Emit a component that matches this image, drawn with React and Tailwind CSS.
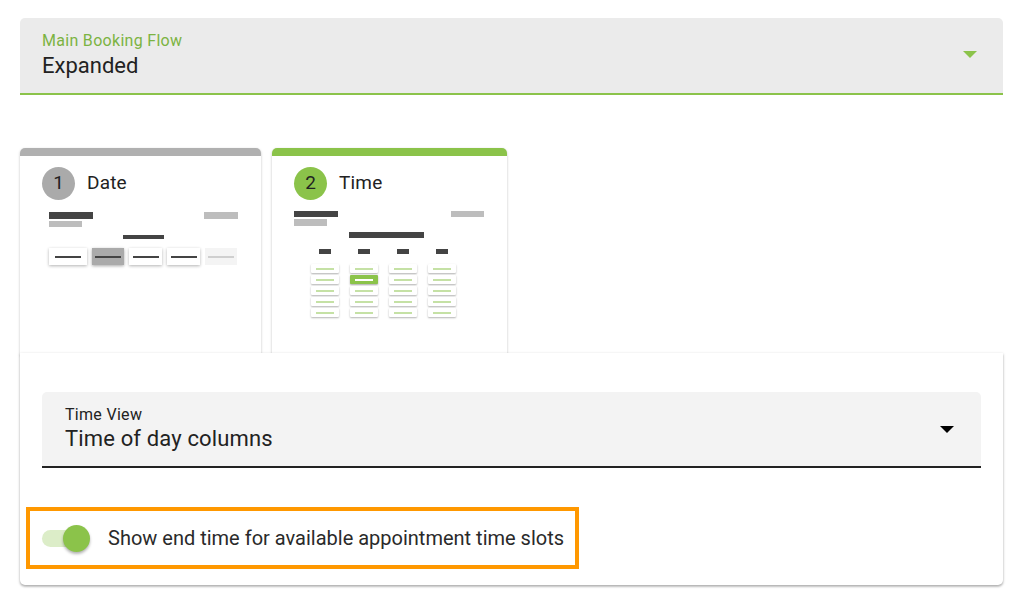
import { useState } from "react";

const GREEN = "#8bc34a";

const DateThumb = () => {
    const boxes = [
        { w: "w-[38px]", kind: "normal" },
        { w: "w-[32px]", kind: "active" },
        { w: "w-[33px]", kind: "normal" },
        { w: "w-[33px]", kind: "normal" },
        { w: "w-[32px]", kind: "off" },
    ];

    return (
        <div className="ml-[7px] mr-[23px] mt-[12px] flex flex-col">
            <div className="flex justify-between">
                <div className="flex flex-col gap-[2px]">
                    <div className="w-[44px] h-[7px] bg-[#444]" />
                    <div className="w-[33px] h-[6px] bg-[#bdbdbd]" />
                </div>
                <div className="w-[34px] h-[7px] bg-[#bdbdbd]" />
            </div>
            <div className="mt-[8px] self-center w-[41px] h-[4px] bg-[#444]" />
            <div className="mt-[9px] flex gap-[5px]">
                {
                    boxes.map((b, i) => (
                        <div
                            key={i}
                            className={"h-[17px] flex items-center justify-center " + b.w + " " +
                                (b.kind === "active" ? "bg-[#aaaaaa] shadow-[0_1px_3px_rgba(0,0,0,0.35)]" :
                                    b.kind === "off" ? "bg-[#f4f4f4]" : "bg-white shadow-[0_1px_3px_rgba(0,0,0,0.3)]")}
                        >
                            <div className={"w-[26px] h-[2px] " + (b.kind === "off" ? "bg-[#cfcfcf]" : "bg-[#444]")} />
                        </div>
                    ))
                }
            </div>
        </div>
    );
};

const TimeThumb = () => {
    const cols = [
        [false, false, false, false, false],
        [false, true, false, false, false],
        [false, false, false, false, false],
        [false, false, false, false, false],
    ];

    return (
        <div className="mr-[23px] mt-[11px] flex flex-col">
            <div className="flex justify-between">
                <div className="flex flex-col gap-[2px]">
                    <div className="w-[44px] h-[6px] bg-[#444]" />
                    <div className="w-[33px] h-[7px] bg-[#bdbdbd]" />
                </div>
                <div className="w-[33px] h-[6px] bg-[#bdbdbd]" />
            </div>
            <div className="mt-[6px] ml-[55px] w-[75px] h-[6px] bg-[#444]" />
            <div className="mt-[11px] ml-[17px] flex gap-[11px]">
                {
                    cols.map((col, ci) => (
                        <div key={ci} className="w-[28px] flex flex-col items-center">
                            <div className="w-[12px] h-[5px] bg-[#444]" />
                            <div className="mt-[10px] flex flex-col gap-[2px]">
                                {
                                    col.map((sel, ri) => (
                                        <div
                                            key={ri}
                                            className={"w-[28px] h-[9px] flex items-center justify-center rounded-[1px] " +
                                                (sel ? "bg-[#8bc34a] shadow-[0_1px_2px_rgba(0,0,0,0.35)]" : "bg-white shadow-[0_1px_2px_rgba(0,0,0,0.3)]")}
                                        >
                                            <div className={"w-[18px] h-[2px] " + (sel ? "bg-white" : "bg-[#c5e1a5]")} />
                                        </div>
                                    ))
                                }
                            </div>
                        </div>
                    ))
                }
            </div>
        </div>
    );
};

const StepCard = ({ num, title, active, width, children }) => {
    return (
        <div className={"h-[207px] flex flex-col rounded-t-[5px] overflow-hidden bg-white shadow-[0_1px_3px_rgba(0,0,0,0.2),0_1px_1px_rgba(0,0,0,0.12)] " + width}>
            <div className={"h-[8px] " + (active ? "bg-[#8bc34a]" : "bg-[#b0b0b0]")} />
            <div className="pl-[22px] flex flex-col">
                <div className="mt-[11px] flex items-center gap-[12px]">
                    <div className={"w-[33px] h-[33px] rounded-full flex items-center justify-center text-[19px] text-[#222] " + (active ? "bg-[#8bc34a]" : "bg-[#aaaaaa]")}>
                        {num}
                    </div>
                    <span className="text-[19px] tracking-[0.2px] text-[#222]">{title}</span>
                </div>
                {children}
            </div>
        </div>
    );
};

const Caret = ({ color }) => (
    <svg width="14" height="7" viewBox="0 0 14 7">
        <path d="M0 0 L14 0 L7 7 Z" fill={color} />
    </svg>
);

export default function App() {
    const [on, setOn] = useState(true);

    return (
        <div className="w-[1024px] h-[592px] bg-white px-[20px] pt-[18px] overflow-hidden font-['Roboto',sans-serif]">
            <div className="w-[983px] h-[77px] bg-[#ebebeb] rounded-t-[5px] border-b-2 border-[#8bc34a] pl-[22px] pr-[26px] flex items-center justify-between">
                <div className="flex flex-col">
                    <span className="text-[16px] leading-[18px] tracking-[0.3px] text-[#7cb342]">Main Booking Flow</span>
                    <span className="mt-[3px] text-[22px] leading-[26px] text-[#222]">Expanded</span>
                </div>
                <div className="mb-[2px]">
                    <Caret color={GREEN} />
                </div>
            </div>

            <div className="mt-[53px] flex gap-[11px]">
                <StepCard num="1" title="Date" width="w-[241px]">
                    <DateThumb />
                </StepCard>
                <StepCard num="2" title="Time" width="w-[235px]" active>
                    <TimeThumb />
                </StepCard>
            </div>

            <div className="relative -mt-[2px] w-[983px] h-[232px] bg-white rounded-b-[5px] shadow-[0_1px_3px_rgba(0,0,0,0.25),0_2px_2px_rgba(0,0,0,0.14)] pt-[39px] flex flex-col">
                <div className="mx-[22px] h-[76px] bg-[#f3f3f3] rounded-t-[5px] border-b-2 border-[#222] pl-[23px] pr-[27px] flex items-center justify-between">
                    <div className="flex flex-col">
                        <span className="text-[16px] leading-[18px] tracking-[0.3px] text-[#222]">Time View</span>
                        <span className="mt-[2px] text-[22px] leading-[26px] tracking-[0.15px] text-[#222]">Time of day columns</span>
                    </div>
                    <Caret color="#000" />
                </div>

                <div className="mt-[39px] ml-[6px] w-[553px] h-[62px] border-4 border-[#ff9800] pl-[12px] flex items-center gap-[20px]">
                    <button
                        className="relative w-[46px] h-[27px] flex items-center"
                        onClick={() => setOn(v => !v)}
                    >
                        <span className="w-[46px] h-[17px] rounded-full bg-[#dcedc8]" />
                        <span className={"absolute top-0 w-[27px] h-[27px] rounded-full bg-[#8bc34a] shadow-[0_2px_3px_rgba(0,0,0,0.3)] " + (on ? "right-[-2px]" : "left-0")} />
                    </button>
                    <span className="text-[20px] text-[#2a2a2a]">Show end time for available appointment time slots</span>
                </div>
            </div>
        </div>
    );
}
